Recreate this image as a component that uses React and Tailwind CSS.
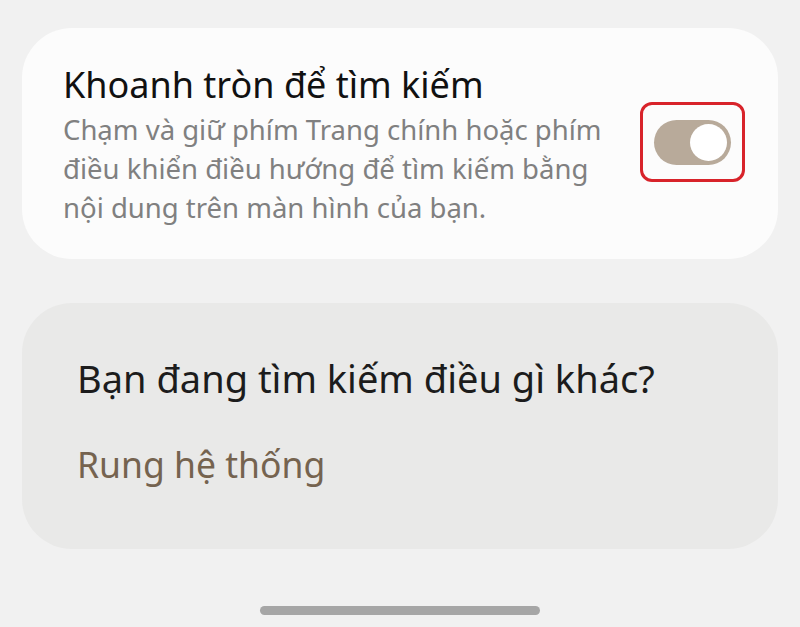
import React from 'react';

export default function App() {
  return (
    <div className="w-[800px] h-[627px] bg-[#f1f1f1] flex flex-col px-[22px] pt-[28px] font-['Noto_Sans',sans-serif] overflow-hidden">
      {/* Circle to Search setting */}
      <div className="bg-[#fcfcfc] rounded-[50px] h-[231px] flex items-start pl-[41px] pr-[33px] pt-[35px]">
        <div className="flex-1">
          <div className="text-[36px] leading-[44px] text-[#111111]">Khoanh tròn để tìm kiếm</div>
          <div className="text-[27.5px] leading-[39px] text-[#808080] w-[552px] mt-[3px]">
            Chạm và giữ phím Trang chính hoặc phím điều khiển điều hướng để tìm kiếm bằng nội dung trên màn hình của bạn.
          </div>
        </div>
        <div className="mt-[39px] w-[105px] h-[80px] border-[3px] border-[#d8232a] rounded-[12px] flex items-center justify-center">
          <div className="w-[77px] h-[45px] rounded-full bg-[#b8aa9a] flex items-center justify-end pr-[4px]">
            <div className="w-[37px] h-[37px] rounded-full bg-white"></div>
          </div>
        </div>
      </div>

      {/* Suggestions */}
      <div className="mt-[44px] bg-[#e9e9e8] rounded-[50px] h-[246px] flex flex-col pl-[55px] pt-[53px]">
        <div className="text-[38px] leading-[44px] text-[#1c1c1c]">Bạn đang tìm kiếm điều gì khác?</div>
        <div className="mt-[42px] text-[35.5px] leading-[44px] text-[#75634f]">Rung hệ thống</div>
      </div>

      <div className="flex-1 flex items-end justify-center pb-[12px]">
        <div className="w-[280px] h-[9px] rounded-full bg-[#a6a6a6]"></div>
      </div>
    </div>
  );
}
